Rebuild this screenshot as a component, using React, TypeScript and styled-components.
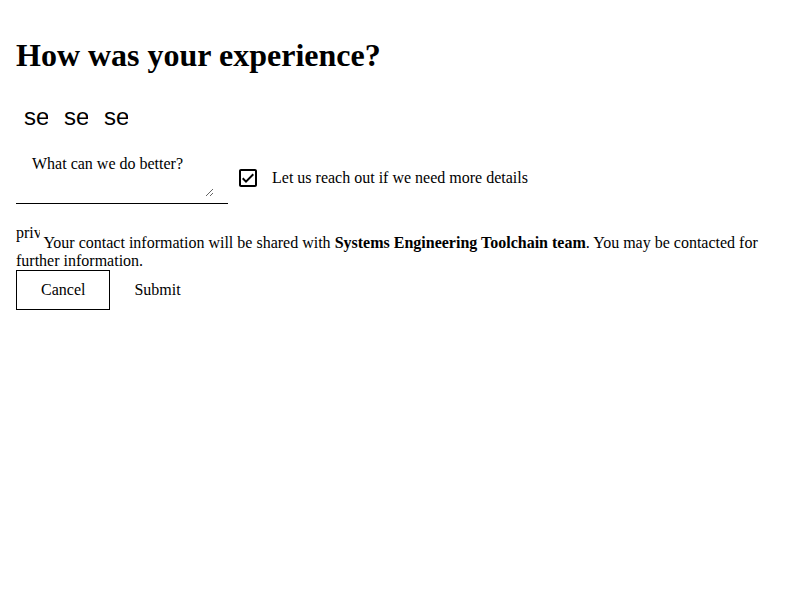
import React from "react";
import styled, { createGlobalStyle } from "styled-components";

const Global = createGlobalStyle`
  body {
    margin: 8px;
    font-family: "Liberation Serif", "Times New Roman", serif;
    font-size: 16px;
    color: #000;
    background: #fff;
  }
`;

const Page = styled.div`
  padding: 8px;
`;

const Title = styled.h1`
  font-size: 32px;
  font-weight: bold;
  margin: 21.44px 0;
`;

const Rating = styled.div`
  display: flex;
`;

const RateButton = styled.span`
  display: inline-block;
  padding: 9px 8px 8px;
`;

const IconText = styled.span`
  display: block;
  width: 24px;
  height: 24px;
  overflow: hidden;
  white-space: nowrap;
  font-family: "Liberation Sans", Arial, sans-serif;
  font-size: 24px;
  line-height: 24px;
`;

const FormRow = styled.div`
  display: flex;
  align-items: center;
  gap: 8px;
  margin-top: 15px;
`;

const Field = styled.div`
  width: 212px;
  box-sizing: border-box;
  padding: 0 14px 6px;
  border-bottom: 1px solid #000;
`;

const Feedback = styled.textarea`
  display: block;
  width: 184px;
  height: 45px;
  box-sizing: border-box;
  border: none;
  padding: 3px 2px 2px;
  font-family: "Liberation Serif", "Times New Roman", serif;
  font-size: 16px;
  outline: none;
  &::placeholder {
    color: #000;
  }
`;

const CheckLabel = styled.label`
  display: flex;
  align-items: center;
  gap: 12px;
`;

const Privacy = styled.p`
  margin: 20px 0 0;
  line-height: 18px;
`;

const PrivIcon = styled.span`
  display: inline-block;
  width: 24px;
  height: 24px;
  overflow: hidden;
  white-space: nowrap;
  vertical-align: baseline;
  line-height: 18px;
`;

const Actions = styled.div`
  display: flex;
  align-items: center;
`;

const Button = styled.button<{ $outlined?: boolean }>`
  font-family: "Liberation Serif", "Times New Roman", serif;
  font-size: 16px;
  background: none;
  color: #000;
  height: 40px;
  padding: 0 24px;
  border: ${(p) => (p.$outlined ? "1px solid #000" : "none")};
  cursor: pointer;
`;

const CheckIcon = () => (
  <svg width="24" height="24" viewBox="0 0 24 24" fill="#000">
    <path d="M19 3H5c-1.11 0-2 .9-2 2v14c0 1.1.89 2 2 2h14c1.11 0 2-.9 2-2V5c0-1.1-.89-2-2-2zm0 16H5V5h14v14zM17.99 9l-1.41-1.42L10 14.17l-2.59-2.58L6 13l4 4z" />
  </svg>
);

export default function App() {
  return (
    <>
      <Global />
      <Page>
        <Title>How was your experience?</Title>
        <Rating>
          <RateButton><IconText>sentiment_dissatisfied</IconText></RateButton>
          <RateButton><IconText>sentiment_neutral</IconText></RateButton>
          <RateButton><IconText>sentiment_satisfied</IconText></RateButton>
        </Rating>
        <FormRow>
          <Field>
            <Feedback placeholder="What can we do better?" />
          </Field>
          <CheckLabel>
            <CheckIcon />
            Let us reach out if we need more details
          </CheckLabel>
        </FormRow>
        <Privacy>
          <PrivIcon>privacy_tip</PrivIcon>{" "}
          Your contact information will be shared with <b>Systems Engineering Toolchain team</b>. You may be contacted for further information.
        </Privacy>
        <Actions>
          <Button $outlined>Cancel</Button>
          <Button>Submit</Button>
        </Actions>
      </Page>
    </>
  );
}
